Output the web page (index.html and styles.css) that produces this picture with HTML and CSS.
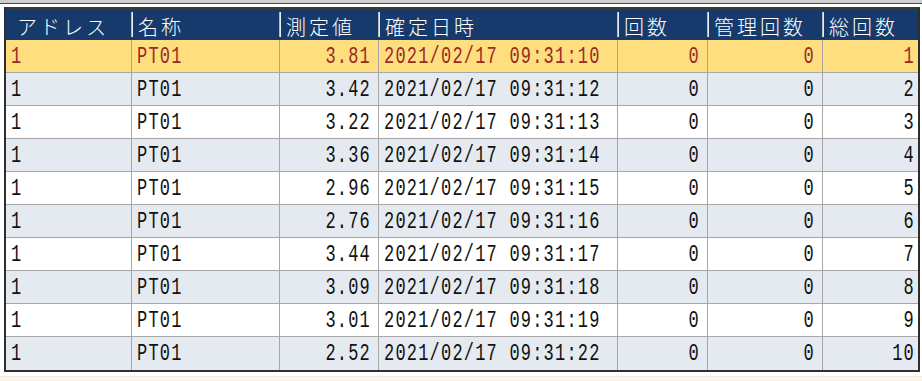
FILE: index.html
```html
<!DOCTYPE html>
<html lang="ja">
<head>
<meta charset="utf-8">
<title>測定一覧</title>
<link rel="stylesheet" href="styles.css">
</head>
<body>
<div class="topbar"></div>
<div class="frame">
  <div class="grid">
    <div class="hcell"><span class="htext">アドレス</span></div>
    <div class="hcell"><span class="hbar"></span><span class="htext">名称</span></div>
    <div class="hcell"><span class="hbar"></span><span class="htext">測定値</span></div>
    <div class="hcell"><span class="hbar"></span><span class="htext">確定日時</span></div>
    <div class="hcell"><span class="hbar"></span><span class="htext">回数</span></div>
    <div class="hcell"><span class="hbar"></span><span class="htext">管理回数</span></div>
    <div class="hcell"><span class="hbar"></span><span class="htext">総回数</span></div>

    <div class="cell sel"><span class="t">1</span></div>
    <div class="cell sel"><span class="t">PT01</span></div>
    <div class="cell sel r"><span class="t">3.81</span></div>
    <div class="cell sel"><span class="t">2021/02/17 09:31:10</span></div>
    <div class="cell sel r"><span class="t">0</span></div>
    <div class="cell sel r"><span class="t">0</span></div>
    <div class="cell sel r last"><span class="t">1</span></div>

    <div class="cell alt"><span class="t">1</span></div>
    <div class="cell alt"><span class="t">PT01</span></div>
    <div class="cell alt r"><span class="t">3.42</span></div>
    <div class="cell alt"><span class="t">2021/02/17 09:31:12</span></div>
    <div class="cell alt r"><span class="t">0</span></div>
    <div class="cell alt r"><span class="t">0</span></div>
    <div class="cell alt r last"><span class="t">2</span></div>

    <div class="cell"><span class="t">1</span></div>
    <div class="cell"><span class="t">PT01</span></div>
    <div class="cell r"><span class="t">3.22</span></div>
    <div class="cell"><span class="t">2021/02/17 09:31:13</span></div>
    <div class="cell r"><span class="t">0</span></div>
    <div class="cell r"><span class="t">0</span></div>
    <div class="cell r last"><span class="t">3</span></div>

    <div class="cell alt"><span class="t">1</span></div>
    <div class="cell alt"><span class="t">PT01</span></div>
    <div class="cell alt r"><span class="t">3.36</span></div>
    <div class="cell alt"><span class="t">2021/02/17 09:31:14</span></div>
    <div class="cell alt r"><span class="t">0</span></div>
    <div class="cell alt r"><span class="t">0</span></div>
    <div class="cell alt r last"><span class="t">4</span></div>

    <div class="cell"><span class="t">1</span></div>
    <div class="cell"><span class="t">PT01</span></div>
    <div class="cell r"><span class="t">2.96</span></div>
    <div class="cell"><span class="t">2021/02/17 09:31:15</span></div>
    <div class="cell r"><span class="t">0</span></div>
    <div class="cell r"><span class="t">0</span></div>
    <div class="cell r last"><span class="t">5</span></div>

    <div class="cell alt"><span class="t">1</span></div>
    <div class="cell alt"><span class="t">PT01</span></div>
    <div class="cell alt r"><span class="t">2.76</span></div>
    <div class="cell alt"><span class="t">2021/02/17 09:31:16</span></div>
    <div class="cell alt r"><span class="t">0</span></div>
    <div class="cell alt r"><span class="t">0</span></div>
    <div class="cell alt r last"><span class="t">6</span></div>

    <div class="cell"><span class="t">1</span></div>
    <div class="cell"><span class="t">PT01</span></div>
    <div class="cell r"><span class="t">3.44</span></div>
    <div class="cell"><span class="t">2021/02/17 09:31:17</span></div>
    <div class="cell r"><span class="t">0</span></div>
    <div class="cell r"><span class="t">0</span></div>
    <div class="cell r last"><span class="t">7</span></div>

    <div class="cell alt"><span class="t">1</span></div>
    <div class="cell alt"><span class="t">PT01</span></div>
    <div class="cell alt r"><span class="t">3.09</span></div>
    <div class="cell alt"><span class="t">2021/02/17 09:31:18</span></div>
    <div class="cell alt r"><span class="t">0</span></div>
    <div class="cell alt r"><span class="t">0</span></div>
    <div class="cell alt r last"><span class="t">8</span></div>

    <div class="cell"><span class="t">1</span></div>
    <div class="cell"><span class="t">PT01</span></div>
    <div class="cell r"><span class="t">3.01</span></div>
    <div class="cell"><span class="t">2021/02/17 09:31:19</span></div>
    <div class="cell r"><span class="t">0</span></div>
    <div class="cell r"><span class="t">0</span></div>
    <div class="cell r last"><span class="t">9</span></div>

    <div class="cell alt end"><span class="t">1</span></div>
    <div class="cell alt end"><span class="t">PT01</span></div>
    <div class="cell alt end r"><span class="t">2.52</span></div>
    <div class="cell alt end"><span class="t">2021/02/17 09:31:22</span></div>
    <div class="cell alt end r"><span class="t">0</span></div>
    <div class="cell alt end r"><span class="t">0</span></div>
    <div class="cell alt end r last"><span class="t">10</span></div>
  </div>
</div>
<div class="bottomstrip"></div>
</body>
</html>
```
FILE: styles.css
```css
html, body {
  margin: 0;
  padding: 0;
  background: #ffffff;
}
body {
  width: 922px;
  height: 381px;
  overflow: hidden;
}
.topbar {
  height: 3px;
  background: #cfcfcf;
  border-bottom: 1px solid #4a4a4a;
}
.frame {
  margin: 3px 0 0 4px;
  width: 912px;
  border: 2px solid #2e2e2e;
  border-top-color: #3a3a3a;
}
.grid {
  display: grid;
  grid-template-columns: 126px 148px 99px 239px 90px 115px 95px;
  grid-template-rows: 31px repeat(10, 33px);
}
.hcell {
  background: #173a6c;
  display: flex;
  align-items: center;
  color: #ffffff;
  font-family: "Noto Sans CJK JP", sans-serif;
  font-size: 20px;
  font-weight: 300;
  letter-spacing: 3px;
}
.hcell:first-child {
  padding-left: 11px;
}
.hbar {
  width: 2px;
  height: 25px;
  margin-left: -1px;
  margin-right: 5px;
  background: linear-gradient(to right, #b8b8b8 50%, #ececec 50%);
  flex: none;
}
.htext {
  line-height: 1;
  padding-top: 4px;
}
.cell {
  background: #ffffff;
  border-right: 1px solid #a6a6a6;
  border-bottom: 1px solid #a6a6a6;
  display: flex;
  align-items: center;
  padding-left: 5px;
  font-family: "Liberation Mono", monospace;
  font-size: 17px;
  letter-spacing: 1.2px;
  color: #111111;
  overflow: hidden;
}
.cell.r {
  justify-content: flex-end;
  padding-left: 0;
  padding-right: 7px;
}
.cell.last {
  border-right: none;
  padding-right: 3px;
}
.cell.alt {
  background: #e5eaf0;
}
.cell.sel {
  background: #ffde7f;
  color: #9a2a22;
}
.cell.end {
  border-bottom: none;
}
.t {
  display: inline-block;
  line-height: 1;
  transform: scaleY(1.45);
}
.bottomstrip {
  margin-top: 4px;
  height: 7px;
  background: #fcf4e4;
  border-top: 1px solid #ececec;
}
```
